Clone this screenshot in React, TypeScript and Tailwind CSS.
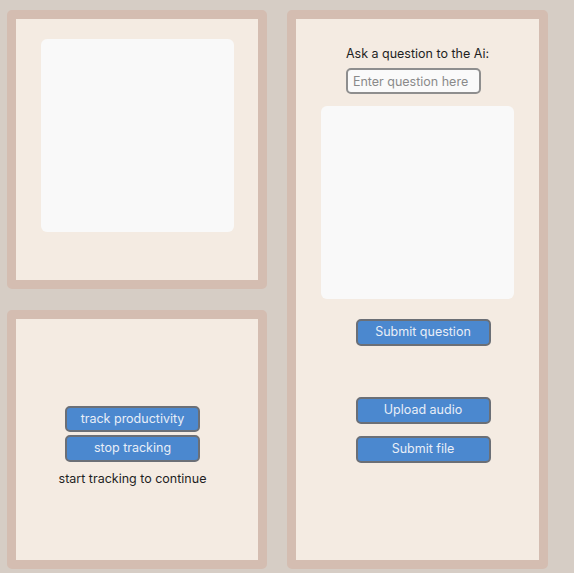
import React from "react";

const font = { fontFamily: 'Inter, "Liberation Sans", Arial, sans-serif' };

function ActionButton({ label, className = "" }: { label: string; className?: string }) {
  return (
    <button
      className={
        "h-[27px] w-[135px] rounded-[5px] border-2 border-[#6b6f76] bg-[#4b88cf] text-[12.5px] leading-none text-[#e8eef7] " +
        className
      }
    >
      {label}
    </button>
  );
}

export default function App() {
  return (
    <div className="min-h-screen bg-[#d6cdc5] pl-[7px] pt-[10px]" style={font}>
      <div className="grid grid-cols-[260px_261px] grid-rows-[279px_259px] gap-x-5 gap-y-[21px]">
        {/* video preview */}
        <div className="flex justify-center rounded-[5px] border-[9px] border-[#d4bdb1] bg-[#f4ebe2] pt-5">
          <div className="h-[193px] w-[193px] rounded-md bg-[#f9f9f9]" />
        </div>

        {/* AI panel */}
        <div className="row-span-2 flex flex-col items-center rounded-[5px] border-[9px] border-[#d4bdb1] bg-[#f4ebe2] pt-[27px]">
          <div className="flex flex-col items-start">
            <span className="text-[12.5px] leading-4 text-[#1f1f1f]">Ask a question to the Ai:</span>
            <input
              placeholder="Enter question here"
              className="mt-[6px] h-[26px] w-[135px] rounded-[5px] border-2 border-[#8e8e8e] bg-[#fafafa] px-[5px] text-[12.5px] text-[#333] placeholder:text-[#8a8a8a] outline-none"
            />
          </div>
          <div className="mt-3 h-[193px] w-[193px] rounded-md bg-[#f9f9f9]" />
          <ActionButton label="Submit question" className="ml-[11px] mt-5" />
          <ActionButton label="Upload audio" className="ml-[11px] mt-[51px]" />
          <ActionButton label="Submit file" className="ml-[11px] mt-3" />
        </div>

        {/* tracking */}
        <div className="flex flex-col items-center rounded-[5px] border-[9px] border-[#d4bdb1] bg-[#f4ebe2] pt-[87px]">
          <div className="-ml-[9px] flex flex-col items-center">
            <ActionButton label="track productivity" className="!h-[26px]" />
            <ActionButton label="stop tracking" className="mt-[3px]" />
            <p className="mt-[9px] text-[12.5px] leading-4 text-[#1f1f1f]">start tracking to continue</p>
          </div>
        </div>
      </div>
    </div>
  );
}
